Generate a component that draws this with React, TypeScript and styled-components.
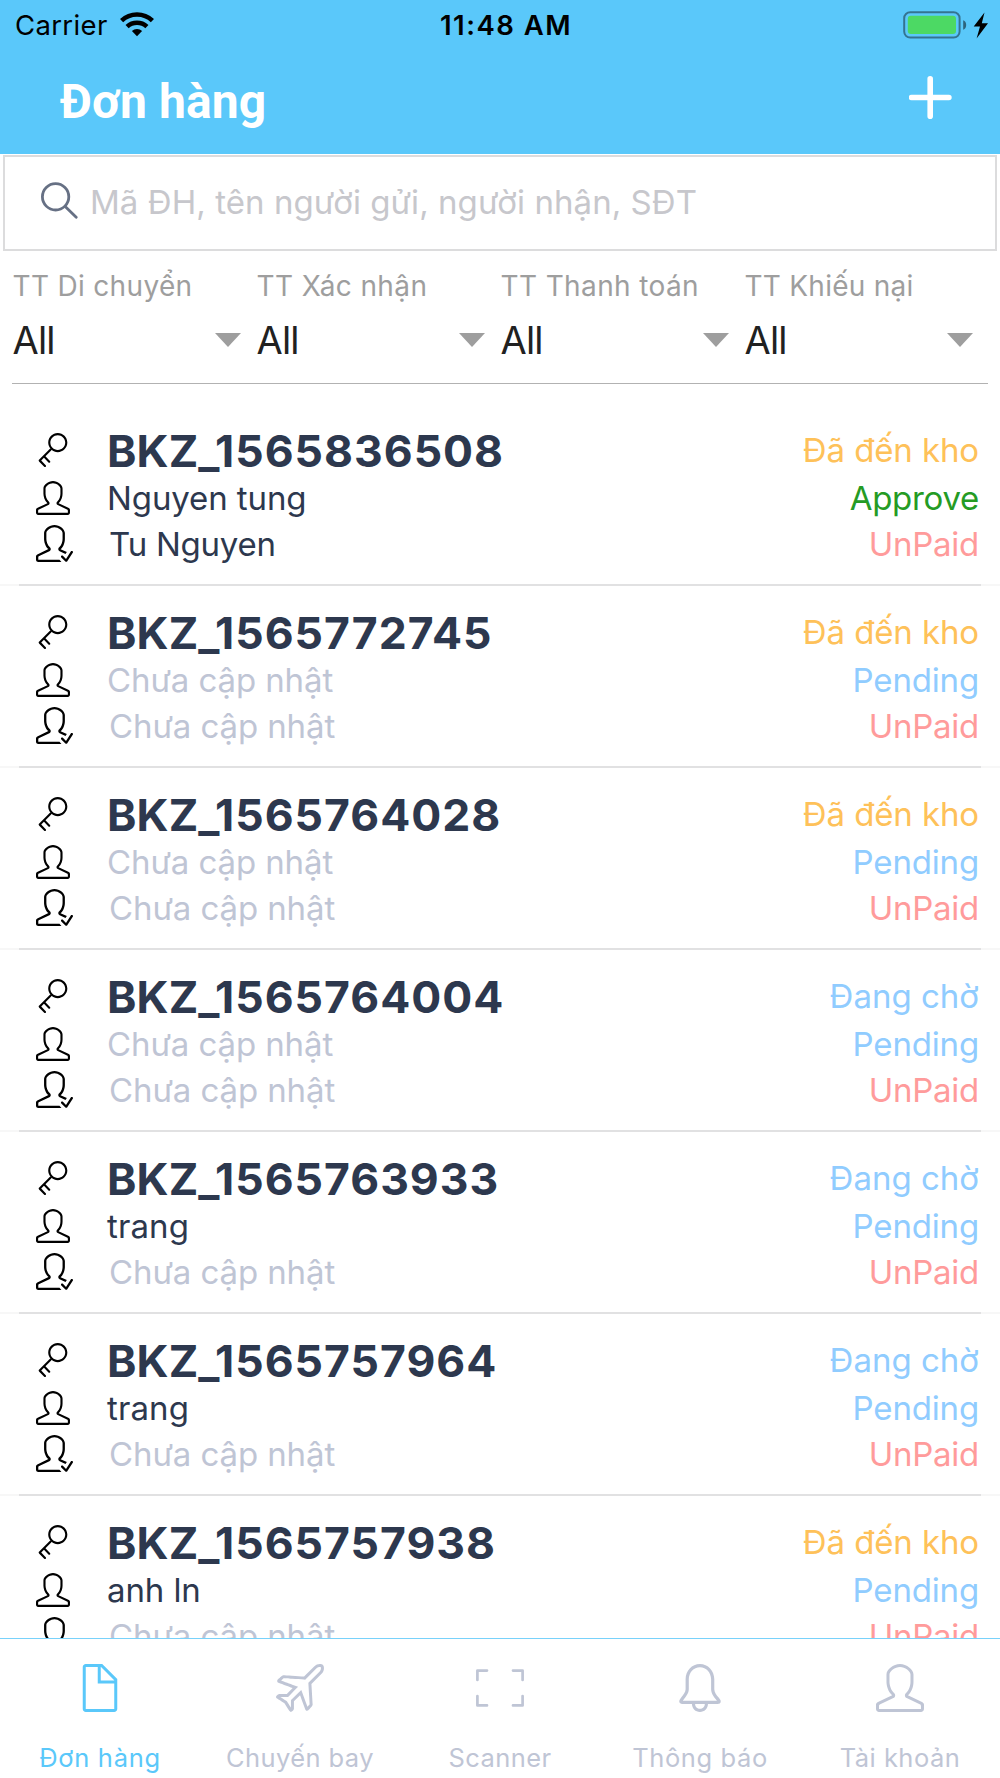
import React from "react";
import styled, { createGlobalStyle } from "styled-components";
import { SlBell, SlDoc, SlKey, SlPlane, SlUser, SlUserFollowing } from "react-icons/sl";

const GlobalStyle = createGlobalStyle`
  * { box-sizing: border-box; }
  body { margin: 0; background: #fff; }
`;

const palette = {
  brand: "#5ac8fa",
  ink: "#2d384e",
  muted: "#bfc5d5",
  arrived: "#fec159",
  waiting: "#90ccff",
  approved: "#259b24",
  unpaid: "#ff9b9b",
};

const Screen = styled.div`
  width: 1000px;
  height: 1778px;
  display: flex;
  flex-direction: column;
  overflow: hidden;
  background: #fff;
  font-family: Inter, "Noto Sans", sans-serif;
`;

const Text = styled.span<{ $track?: number }>`
  display: block;
  white-space: nowrap;
  letter-spacing: ${(p) => p.$track ?? 0}px;
`;

const Header = styled.header`
  flex: none;
  height: 154px;
  background: ${palette.brand};
`;

const StatusBar = styled.div`
  display: grid;
  grid-template-columns: 1fr auto 1fr;
  align-items: center;
  height: 49px;
  padding: 0 11px 0 15px;
  font-size: 27.5px;
  line-height: 34px;
  color: #000;
`;

const Carrier = styled.div`
  display: flex;
  align-items: center;
  gap: 12px;
`;

const Clock = styled(Text)`
  padding-left: 8px;
  font-weight: 600;
`;

const Power = styled.div`
  display: flex;
  justify-content: flex-end;
`;

const NavBar = styled.div`
  display: flex;
  align-items: center;
  justify-content: space-between;
  height: 105px;
  padding: 0 48px 0 60px;
`;

const Title = styled.h1`
  margin: 0;
  font: 700 48px/56px Roboto, sans-serif;
  letter-spacing: 0.1px;
  color: #fff;
`;

const AddButton = styled.button`
  display: flex;
  padding: 0;
  margin-bottom: 9px;
  border: 0;
  background: none;
`;

const SearchBox = styled.div`
  flex: none;
  display: flex;
  align-items: center;
  height: 96px;
  margin: 1px 3px 0;
  padding: 0 0 2px 36px;
  border: 2px solid #dcdcdd;
  font-size: 33px;
  line-height: 40px;
  color: #c7c7cc;
`;

const SearchIcon = styled.svg`
  flex: none;
  margin: 0 12px 3px 0;
`;

const Filters = styled.div`
  flex: none;
  display: grid;
  grid-template-columns: repeat(4, 244px);
  height: 133px;
  margin: 0 12px;
  padding-top: 17px;
  border-bottom: 1px solid #b2b2b2;
`;

const Filter = styled.div`
  padding: 0 15.5px 0 0.5px;
`;

const FilterLabel = styled(Text)`
  font-size: 28px;
  line-height: 36px;
  color: #9e9e9e;
`;

const Select = styled.div`
  display: flex;
  align-items: center;
  justify-content: space-between;
  margin-top: 12px;
  font-size: 38px;
  line-height: 48px;
  color: #212121;
`;

const Caret = styled.i`
  border: solid transparent;
  border-width: 14px 13.5px 0;
  border-top-color: #9e9e9e;
`;

const List = styled.main`
  flex: 1;
  min-height: 0;
  overflow: hidden;
  padding-top: 20px;
`;

const Row = styled.article`
  height: 182px;
  padding-top: 23px;
  display: flex;
  flex-direction: column;
  justify-content: space-between;
`;

const Lines = styled.div`
  display: grid;
  grid-template-columns: 72px 1fr auto;
  grid-template-rows: 48px 46px 46px;
  align-items: center;
  padding: 0 21px 0 35px;
`;

const IconCell = styled.div<{ $shift?: number; $lift?: number }>`
  display: flex;
  padding-left: ${(p) => p.$shift ?? 0}px;
  padding-bottom: ${(p) => p.$lift ?? 0}px;
  color: #000;
`;

const Code = styled(Text)`
  font-size: 44.5px;
  font-weight: 700;
  line-height: 48px;
  color: ${palette.ink};
`;

const CodePrefix = styled.span`
  margin-right: -4.5px;
  letter-spacing: 0.1px;
`;

const Name = styled(Text)<{ $empty: boolean; $indent?: number }>`
  padding-left: ${(p) => p.$indent ?? 0}px;
  font-size: 33px;
  line-height: 46px;
  color: ${(p) => (p.$empty ? palette.muted : palette.ink)};
`;

const Status = styled(Text)<{ $color: string; $lift?: number }>`
  padding-bottom: ${(p) => p.$lift ?? 0}px;
  font-size: 33px;
  line-height: 46px;
  text-align: right;
  color: ${(p) => p.$color};
`;

const Divider = styled.div`
  height: 2px;
  padding: 0 19px;
  background: #e1e1e2 content-box;
  box-shadow: inset 19px 0 #f7f7f7, inset -19px 0 #f7f7f7;
`;

const TabBar = styled.nav`
  flex: none;
  display: grid;
  grid-template-columns: repeat(5, 1fr);
  height: 140px;
  border-top: 1px solid #78d2fb;
  background: #fff;
`;

const Tab = styled.div<{ $active?: boolean }>`
  display: flex;
  flex-direction: column;
  align-items: center;
  padding-top: 25px;
  font-size: 25.5px;
  line-height: 32px;
  color: ${(p) => (p.$active ? palette.brand : palette.muted)};
`;

const TabLabel = styled(Text)`
  margin-top: 30px;
`;

const EMPTY = "Chưa cập nhật";

const tracking: Record<string, number> = {
  "Nguyen tung": -0.1,
  "Tu Nguyen": -0.24,
  [EMPTY]: -0.1,
  trang: 0.1,
  "anh ln": -0.1,
  "Đã đến kho": -0.11,
  Approve: -0.3,
  UnPaid: -0.27,
  Pending: -0.17,
  "Đang chờ": 0,
};

const statusColor: Record<string, string> = {
  "Đã đến kho": palette.arrived,
  "Đang chờ": palette.waiting,
  Approve: palette.approved,
  Pending: palette.waiting,
  UnPaid: palette.unpaid,
};

type Order = { code: string; sender: string; receiver: string; move: string; confirm: string };

const orders: Order[] = [
  { code: "1565836508", sender: "Nguyen tung", receiver: "Tu Nguyen", move: "Đã đến kho", confirm: "Approve" },
  { code: "1565772745", sender: EMPTY, receiver: EMPTY, move: "Đã đến kho", confirm: "Pending" },
  { code: "1565764028", sender: EMPTY, receiver: EMPTY, move: "Đã đến kho", confirm: "Pending" },
  { code: "1565764004", sender: EMPTY, receiver: EMPTY, move: "Đang chờ", confirm: "Pending" },
  { code: "1565763933", sender: "trang", receiver: EMPTY, move: "Đang chờ", confirm: "Pending" },
  { code: "1565757964", sender: "trang", receiver: EMPTY, move: "Đang chờ", confirm: "Pending" },
  { code: "1565757938", sender: "anh ln", receiver: EMPTY, move: "Đã đến kho", confirm: "Pending" },
];

const filters = [
  { label: "TT Di chuyển", track: 0.32 },
  { label: "TT Xác nhận", track: 0.4 },
  { label: "TT Thanh toán", track: 0.38 },
  { label: "TT Khiếu nại", track: 0.25 },
];

const WifiIcon = () => (
  <svg width="34" height="25" viewBox="0 0 34 25" fill="none" stroke="#000" strokeWidth="4.6">
    <path d="M1.6 8.6A22.4 22.4 0 0 1 32.4 8.6" />
    <path d="M7.1 14.6A14.6 14.6 0 0 1 26.9 14.6" />
    <path d="M17 24.2 11.9 19A7.4 7.4 0 0 1 22.1 19Z" fill="#000" stroke="none" />
  </svg>
);

const BatteryIcon = () => (
  <svg width="86" height="28" viewBox="0 0 86 28">
    <rect x="1.2" y="1.2" width="55.4" height="25.4" rx="6" fill="none" stroke="#000" strokeOpacity=".42" strokeWidth="2" />
    <rect x="4.8" y="4.8" width="48.2" height="18.2" rx="3" fill="#4cd964" />
    <path d="M60.2 9.2Q63.2 10.5 63.2 14T60.2 18.8Z" fillOpacity=".5" />
    <path d="M81.5 1.5 70.7 15.5H77L73.6 27.5 85 12.2H78.8Z" />
  </svg>
);

const ScanIcon = () => (
  <svg width="48" height="48" viewBox="0 0 48 48" fill="none" stroke="currentColor" strokeWidth="2.7" strokeLinecap="round" strokeLinejoin="round">
    <path d="M1.4 16V6.6H11M37 6.6H46.6V16M46.6 32V41.4H37M11 41.4H1.4V32" />
  </svg>
);

const OrderRow = ({ order }: { order: Order }) => (
  <Row>
    <Lines>
      <IconCell $shift={1} $lift={2}><SlKey size={34} /></IconCell>
      <Code $track={1}><CodePrefix>BKZ_</CodePrefix>{order.code}</Code>
      <Status $lift={2} $color={statusColor[order.move]} $track={tracking[order.move]}>{order.move}</Status>

      <IconCell $shift={1}><SlUser size={34} /></IconCell>
      <Name $empty={order.sender === EMPTY} $track={tracking[order.sender]}>{order.sender}</Name>
      <Status $color={statusColor[order.confirm]} $track={tracking[order.confirm]}>{order.confirm}</Status>

      <IconCell $shift={1} $lift={1}><SlUserFollowing size={37} /></IconCell>
      <Name $empty={order.receiver === EMPTY} $indent={2} $track={tracking[order.receiver]}>{order.receiver}</Name>
      <Status $color={statusColor.UnPaid} $track={tracking.UnPaid}>UnPaid</Status>
    </Lines>
    <Divider />
  </Row>
);

export default function App() {
  return (
    <Screen>
      <GlobalStyle />
      <Header>
        <StatusBar>
          <Carrier>
            <Text $track={0.35}>Carrier</Text>
            <WifiIcon />
          </Carrier>
          <Clock $track={1.5}>11:48 AM</Clock>
          <Power><BatteryIcon /></Power>
        </StatusBar>
        <NavBar>
          <Title>Đơn hàng</Title>
          <AddButton aria-label="add">
            <svg width="43" height="43" viewBox="0 0 43 43" stroke="#fff" strokeWidth="5.6" strokeLinecap="round">
              <path d="M21.2 2.8V40.2M2.5 21.5H39.9" />
            </svg>
          </AddButton>
        </NavBar>
      </Header>

      <SearchBox>
        <SearchIcon width="37" height="37" viewBox="0 0 37 37" fill="none" stroke="#667084" strokeWidth="2.8" strokeLinecap="round">
          <circle cx="14.6" cy="14.8" r="13.2" />
          <path d="M24.2 24.4 35.2 35.2" />
        </SearchIcon>
        <Text $track={0.06}>Mã ĐH, tên người gửi, người nhận, SĐT</Text>
      </SearchBox>

      <Filters>
        {filters.map((f) => (
          <Filter key={f.label}>
            <FilterLabel $track={f.track}>{f.label}</FilterLabel>
            <Select>
              <Text $track={-0.8}>All</Text>
              <Caret />
            </Select>
          </Filter>
        ))}
      </Filters>

      <List>
        {orders.map((o) => <OrderRow key={o.code} order={o} />)}
      </List>

      <TabBar>
        <Tab $active><SlDoc size={48} /><TabLabel $track={0.7}>Đơn hàng</TabLabel></Tab>
        <Tab><SlPlane size={48} /><TabLabel $track={0.4}>Chuyến bay</TabLabel></Tab>
        <Tab><ScanIcon /><TabLabel $track={0.42}>Scanner</TabLabel></Tab>
        <Tab><SlBell size={48} /><TabLabel $track={0.6}>Thông báo</TabLabel></Tab>
        <Tab><SlUser size={48} /><TabLabel $track={0.48}>Tài khoản</TabLabel></Tab>
      </TabBar>
    </Screen>
  );
}
